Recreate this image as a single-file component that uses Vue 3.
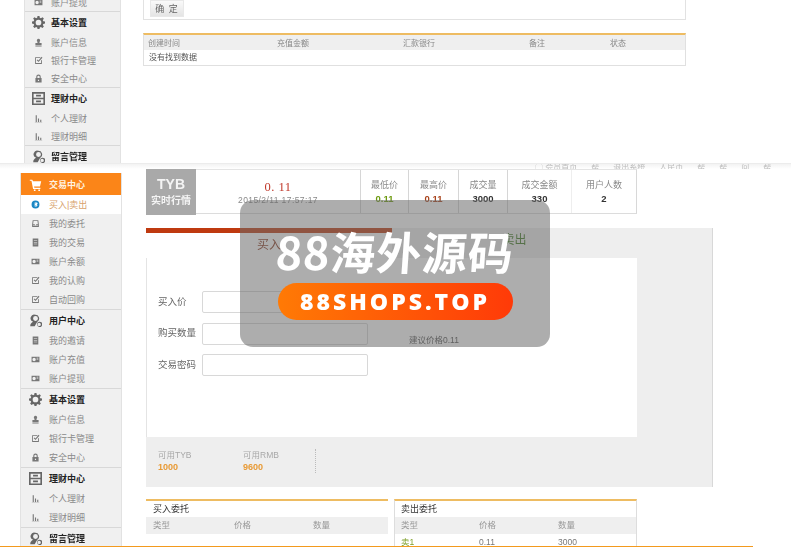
<script setup>
const icons = {
  cart: 'M1 2h3l1 2h10l-1.5 6.5H6.2L6.6 12H14v1.5H5L3 3.5H1zM6 14h2v2H6zM11.500 14h2v2h-2z',
  coin: 'M8 1a7 7 0 1 1 0 14A7 7 0 0 1 8 1zM6.500 4.500v7h3a1.800 1.800 0 0 0 .8-3.400A1.700 1.700 0 0 0 9.500 4.500zM8 6h1v1.200H8zM8 8.800h1.200v1.400H8z',
  tray: 'M3 2h10l1 8v4H2v-4zM4.500 3.500l-.8 6h2.800l1 1.500h1l1-1.500h2.800l-.8-6zM3.500 11.500v1h9v-1z',
  doc: 'M3 1h10v14H3zM5 4v1h6V4zM5 7v1h6V7zM5 10v1h6v-1z',
  card: 'M1 3h14v10H1zM5.500 5a3 3 0 1 0 .01 6 3 3 0 0 0-.01-6zM10 5v1h3V5zM10 8v1h3V8z',
  check: 'M2 2h10l-1.500 1.500H3.500v9h9V8L14 6.500V14H2zM13.500 1.500L15 3 8 10.500 4.800 7.500l1.400-1.400L8 7.800z',
  person: 'M8 1.500a3 3 0 0 1 2 5.200c-.4.500-.4 1.500 0 2.300h3.500v3.500h-11V9H6c.4-.8.4-1.800 0-2.300A3 3 0 0 1 8 1.500zM2.500 13.500h11V15h-11z',
  lock: 'M8 1a4 4 0 0 1 4 4v2h1.500v8h-11V7H4V5a4 4 0 0 1 4-4zM8 3a2 2 0 0 0-2 2v2h4V5a2 2 0 0 0-2-2zM7 10v2.500h2V10z',
  bars: 'M3 2h2v12H3zM7 8h2v6H7zM11 10h2v4h-2zM1.500 14.500h13v.8h-13z',
  user: 'M8 1a4.500 4.500 0 0 1 2.800 8l-1 1-2.800 5H1.500c0-3 1.500-4.500 3.500-5.500A4.500 4.500 0 0 1 8 1zM8 2.500a3 3 0 1 0 0 6 3 3 0 0 0 0-6zM12.500 9.500a3.300 3.300 0 1 1 0 6.500 3.300 3.300 0 0 1 0-6.500zM12.500 10.700a2.100 2.100 0 1 0 0 4.200 2.100 2.100 0 0 0 0-4.200z',
  gear: 'M6.800 0h2.400l.4 2.200 1.400.6L12.900 1.500l1.700 1.700-1.300 1.900.6 1.400 2.100.4v2.400l-2.100.4-.6 1.400 1.300 1.900-1.700 1.700-1.900-1.300-1.400.6-.4 2.100H6.800l-.4-2.100-1.400-.6-1.900 1.300-1.700-1.700 1.300-1.900-.6-1.400L0 9.200V6.800l2.100-.4.6-1.400-1.300-1.800 1.700-1.700L5 2.800l1.400-.6zM8 4.500a3.500 3.500 0 1 0 0 7 3.500 3.500 0 0 0 0-7z',
  grid: 'M0 0h16v16H0zM2 2v5h12V2zM2 9v5h12V9zM5 3.500h6v2H5zM5 10.500h6v2H5z'
}

const tail = [
  { head: true, icon: 'gear', label: '基本设置' },
  { icon: 'person', label: '账户信息' },
  { icon: 'check', label: '银行卡管理' },
  { icon: 'lock', label: '安全中心' },
  { head: true, icon: 'grid', label: '理财中心' },
  { icon: 'bars', label: '个人理财' },
  { icon: 'bars', label: '理财明细' },
  { head: true, icon: 'user', label: '留言管理' }
]
const topMenu = [{ icon: 'card', label: '账户提现' }, ...tail]
const mainMenu = [
  { head: true, on: true, icon: 'cart', label: '交易中心' },
  { sel: true, icon: 'coin', label: '买入|卖出' },
  { icon: 'tray', label: '我的委托' },
  { icon: 'doc', label: '我的交易' },
  { icon: 'card', label: '账户余额' },
  { icon: 'check', label: '我的认购' },
  { icon: 'check', label: '自动回购' },
  { head: true, icon: 'user', label: '用户中心' },
  { icon: 'doc', label: '我的邀请' },
  { icon: 'card', label: '账户充值' },
  { icon: 'card', label: '账户提现' },
  ...tail
]
const stats = [
  { label: '最低价', value: '0.11', cls: 'green', w: 48 },
  { label: '最高价', value: '0.11', cls: 'brown', w: 50 },
  { label: '成交量', value: '3000', cls: '', w: 49 },
  { label: '成交金额', value: '330', cls: '', w: 64 },
  { label: '用户人数', value: '2', cls: '', w: 66 }
]
const rechargeCols = ['创建时间', '充值金额', '汇款银行', '备注', '状态']
const fields = ['买入价', '购买数量', '交易密码']
const topLinks = ['◯ 会员首页', '帮', '退出系统', '人民币', '帮', '帮', '问', '帮']
</script>

<template>
  <div class="page">
    <section class="shot-top">
      <nav class="side side-top">
        <div v-for="m in topMenu" :key="m.label" class="mi" :class="{ head: m.head }">
          <span class="ic"><svg viewBox="0 0 16 16"><path fill-rule="evenodd" :d="icons[m.icon]" /></svg></span>
          <span>{{ m.label }}</span>
        </div>
      </nav>
      <div class="top-main">
        <div class="top-panel"><button class="ok">确 定</button></div>
        <div class="recharge">
          <div class="rc-row rc-head">
            <span v-for="c in rechargeCols" :key="c">{{ c }}</span>
          </div>
          <div class="rc-empty">没有找到数据</div>
        </div>
      </div>
    </section>

    <div class="strip">
      <span v-for="(l, i) in topLinks" :key="i">{{ l }}</span>
    </div>

    <section class="shot-main">
      <nav class="side side-main">
        <div v-for="(m, i) in mainMenu" :key="i" class="mi" :class="{ head: m.head, on: m.on, sel: m.sel }">
          <span class="ic"><svg viewBox="0 0 16 16"><path fill-rule="evenodd" :d="icons[m.icon]" /></svg></span>
          <span>{{ m.label }}</span>
        </div>
      </nav>

      <div class="main">
        <div class="ticker">
          <div class="tyb"><b>TYB</b><strong>实时行情</strong></div>
          <div class="price">
            <div class="now">0. 11</div>
            <div class="date">2015/2/11 17:57:17</div>
          </div>
          <div v-for="s in stats" :key="s.label" class="stat" :class="'w' + s.w">
            <span>{{ s.label }}</span>
            <b :class="s.cls">{{ s.value }}</b>
          </div>
        </div>

        <div class="trade">
          <div class="tabs">
            <div class="tab active">买入</div>
            <div class="tab">卖出</div>
          </div>
          <div class="form">
            <div v-for="f in fields" :key="f" class="field">
              <label>{{ f }}</label>
              <input type="text" />
              <span v-if="f === '购买数量'" class="hint">建议价格0.11</span>
            </div>
          </div>
          <div class="avail">
            <div class="av"><span>可用TYB</span><b>1000</b></div>
            <div class="av"><span>可用RMB</span><b>9600</b></div>
            <i class="dots"></i>
          </div>
        </div>

        <div class="books">
          <div class="book buy">
            <h4>买入委托</h4>
            <div class="b-row b-head"><span>类型</span><span>价格</span><span>数量</span></div>
          </div>
          <div class="book sell">
            <h4>卖出委托</h4>
            <div class="b-row b-head"><span>类型</span><span>价格</span><span>数量</span></div>
            <div class="b-row"><span class="lv">卖1</span><span>0.11</span><span>3000</span></div>
          </div>
        </div>
      </div>
    </section>

    <div class="baseline"></div>

    <div class="mark">
      <div class="mark-title">88海外源码</div>
      <div class="mark-pill">88SHOPS.TOP</div>
    </div>
  </div>
</template>

<style scoped>
.page {
  position: relative;
  width: 791px;
  height: 547px;
  overflow: hidden;
  background: #fff;
  display: flex;
  flex-direction: column;
  font-family: "Liberation Sans", "Noto Sans CJK SC", sans-serif;
  font-size: 9px;
  color: #555;
}
.shot-top,
.shot-main,
.strip,
.baseline { filter: blur(0.45px); }

/* top crop */
.shot-top {
  height: 163px;
  flex: none;
  display: flex;
  overflow: hidden;
  padding-left: 24px;
  box-sizing: border-box;
}
.side {
  flex: none;
  background: #f0f0f0;
  border-left: 1px solid #e2e2e2;
  border-right: 1px solid #e2e2e2;
  box-sizing: border-box;
}
.side-top { width: 97px; margin-top: -7px; height: 180px; }
.mi {
  height: 18px;
  display: flex;
  align-items: center;
  color: #8a8a8a;
  box-sizing: border-box;
}
.side-main .mi { height: 19px; }
.side-main .mi.head, .mi.head {
  height: 22px;
  color: #222;
  font-weight: 700;
  border-top: 1px solid #d8d8d8;
}
.ic {
  flex: none;
  width: 28px;
  display: flex;
  justify-content: center;
}
.ic svg { width: 9px; height: 9px; fill: #777; }
.head .ic svg { width: 13px; height: 13px; fill: #666; }
.side-main { width: 102px; margin-left: 20px; margin-top: 4px; }
.side-main .mi.on {
  background: #fb8518;
  color: #fff3e0;
  border-top: 0;
}
.mi.on .ic svg { fill: #fff; }
.mi.sel { background: #fff; color: #d8a26c; }
.mi.sel .ic svg { fill: #1b87c4; }
.side-top .ic { width: 26px; }

.top-main {
  margin-left: 22px;
  width: 543px;
}
.top-panel {
  height: 20px;
  border: 1px solid #e2e2e2;
  border-top: 0;
  box-sizing: border-box;
  padding-left: 6px;
}
.ok {
  display: block;
  width: 34px;
  height: 17px;
  padding: 0;
  border: 1px solid #e8e8e8;
  background: linear-gradient(#fafafa, #e4e4e4);
  font: 9px "Liberation Sans", "Noto Sans CJK SC", sans-serif;
  letter-spacing: 1px;
  color: #666;
}
.recharge {
  margin-top: 13px;
  height: 33px;
  border: 1px solid #e0e0e0;
  border-top: 2px solid #eebc62;
  box-sizing: border-box;
}
.rc-row {
  display: grid;
  grid-template-columns: 129px 126px 126px 81px 1fr;
  align-items: center;
  padding-left: 4px;
}
.rc-head {
  height: 15px;
  background: #efefef;
  color: #888;
  font-size: 8px;
}
.rc-empty {
  height: 15px;
  line-height: 15px;
  padding-left: 5px;
  font-size: 8px;
  color: #555;
}

/* strip */
.strip {
  height: 6px;
  flex: none;
  overflow: hidden;
  background: linear-gradient(#f3f3f3, #fff);
  border-top: 1px solid #ececec;
  box-sizing: border-box;
  display: flex;
  gap: 14px;
  padding-left: 535px;
  font-size: 8px;
  line-height: 8px;
  color: #bbb;
  white-space: nowrap;
}

/* main crop */
.shot-main {
  height: 377px;
  flex: none;
  display: flex;
  overflow: hidden;
}
.main {
  margin-left: 24px;
  width: 567px;
  flex: none;
}
.ticker {
  width: 491px;
  height: 45px;
  display: flex;
  border-top: 1px solid #e4e4e4;
  border-bottom: 1px solid #dcdcdc;
  border-right: 1px solid #d8d8d8;
  box-sizing: border-box;
}
.tyb {
  width: 50px;
  height: 46px;
  margin-top: -1px;
  background: #a9a9a9;
  color: #f4f4f4;
  display: flex;
  flex-direction: column;
  align-items: center;
  justify-content: center;
  gap: 1px;
  flex: none;
}
.tyb b { font-size: 14px; line-height: 16px; }
.tyb strong { font-size: 10px; line-height: 15px; }
.price {
  width: 164px;
  flex: none;
  text-align: center;
  padding-top: 10px;
  box-sizing: border-box;
}
.now {
  font-family: "Liberation Serif", serif;
  font-size: 12.500px;
  line-height: 14px;
  letter-spacing: 0.5px;
  color: #c0392b;
}
.date { font-size: 8.500px; line-height: 12px; letter-spacing: 0.4px; color: #8a8a8a; }
.stat {
  flex: none;
  border-left: 1px solid #d6d6d6;
  display: flex;
  flex-direction: column;
  align-items: center;
  padding-top: 8px;
  box-sizing: border-box;
  color: #8a8a8a;
  line-height: 14px;
}
.stat:last-child { border-left-color: #eee; }
.stat b { color: #333; font-size: 9.500px; }
.w48 { width: 48px; }
.w50 { width: 50px; }
.w49 { width: 49px; }
.w64 { width: 64px; }
.w66 { width: 65px; }
.green { color: #6d9a10 !important; }
.brown { color: #a8431c !important; }

.trade {
  margin-top: 14px;
  height: 259px;
  background: #eee;
  border-right: 1px solid #d8d8d8;
  box-sizing: border-box;
}
.tabs {
  width: 491px;
  display: flex;
  height: 30px;
}
.tab {
  width: 245px;
  text-align: center;
  font-family: "Liberation Serif", "Noto Sans CJK SC", serif;
  font-size: 12px;
  line-height: 24px;
  color: #3f7a22;
}
.tab.active {
  width: 246px;
  background: #fff;
  border-top: 5px solid #bf3a10;
  color: #8a3a22;
  line-height: 24px;
  box-sizing: border-box;
}
.form {
  width: 491px;
  height: 179px;
  background: #fff;
  border-left: 1px solid #e4e4e4;
  box-sizing: border-box;
  padding: 33px 0 0 11px;
}
.field {
  display: flex;
  align-items: center;
  height: 22px;
  margin-bottom: 9.500px;
  color: #666;
}
.field label { width: 44px; flex: none; font-size: 9.500px; margin-top: -3px; }
.field input {
  width: 166px;
  height: 22px;
  box-sizing: border-box;
  border: 1px solid #d8d8d8;
  border-radius: 2px;
  background: #fff;
  padding: 0;
  flex: none;
}
.hint { margin: 10px 0 0 41px; font-size: 8.500px; color: #555; }
.avail {
  height: 50px;
  display: flex;
  padding: 12px 0 0 12px;
  box-sizing: border-box;
}
.av {
  width: 85px;
  display: flex;
  flex-direction: column;
  color: #a8a8a8;
  font-size: 8.500px;
  line-height: 12px;
}
.av b { color: #e89a35; font-size: 9px; }
.dots {
  width: 0;
  height: 24px;
  margin-left: -13px;
  border-left: 1px dotted #bbb;
}

.books {
  margin-top: 12px;
  display: flex;
  gap: 6px;
}
.book {
  border-top: 2px solid #eebc62;
  box-sizing: border-box;
  height: 60px;
}
.buy { width: 242px; }
.sell {
  width: 243px;
  border-left: 1px solid #ddd;
  border-right: 1px solid #ddd;
}
.book h4 {
  margin: 0;
  height: 16px;
  line-height: 16px;
  padding-left: 7px;
  font-size: 9px;
  font-weight: 400;
  color: #333;
}
.sell h4 { padding-left: 6px; }
.b-row {
  display: grid;
  grid-template-columns: 81px 79px 1fr;
  height: 16px;
  line-height: 16px;
  padding-left: 7px;
  font-size: 8.500px;
  color: #777;
}
.sell .b-row {
  grid-template-columns: 78px 79px 1fr;
  padding-left: 6px;
}
.b-head { height: 17px; line-height: 17px; background: #efefef; color: #999; }
.lv { color: #7fa02a; }

.baseline {
  height: 1px;
  flex: none;
  width: 753px;
  background: #f39a1e;
}

/* watermark */
.mark {
  position: absolute;
  left: 240px;
  top: 200px;
  width: 310px;
  height: 147px;
  border-radius: 13px;
  background: rgba(105, 105, 105, 0.55);
  display: flex;
  flex-direction: column;
  align-items: center;
}
.mark-title {
  margin-top: 26px;
  height: 50px;
  font-family: "Noto Sans CJK SC", sans-serif;
  font-size: 45px;
  line-height: 50px;
  letter-spacing: 0.8px;
  font-weight: 700;
  color: #fff;
  white-space: nowrap;
  transform: skewX(-4deg);
}
.mark-pill {
  margin-top: 7px;
  width: 235px;
  height: 37px;
  border-radius: 19px;
  background: linear-gradient(90deg, #ff7a05, #ff3a08);
  color: #fff;
  text-align: center;
  font-family: "Open Sans", sans-serif;
  font-weight: 800;
  font-size: 23px;
  line-height: 37px;
  letter-spacing: 3px;
}
</style>
